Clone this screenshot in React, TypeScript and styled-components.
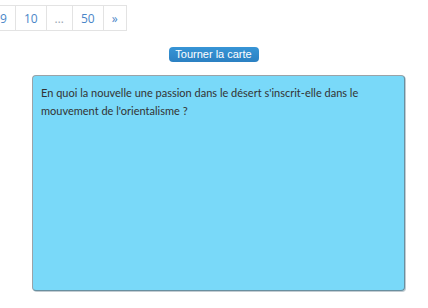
import React from "react";
import styled, { createGlobalStyle } from "styled-components";

const Global = createGlobalStyle`
  html, body { margin: 0; padding: 0; background: #fff; }
  body { font-family: "Open Sans", "Noto Sans", sans-serif; color: #333; }
`;

const Page = styled.div`
  width: 428px;
  height: 308px;
  overflow: hidden;
  display: flex;
  flex-direction: column;
`;

const Pager = styled.ul`
  list-style: none;
  margin: 5px 0 0 -8px;
  padding: 0;
  display: flex;
`;

const PageItem = styled.li<{ $muted?: boolean }>`
  height: 24px;
  padding: 0 8px;
  border: 1px solid #e3e3e3;
  margin-left: -1px;
  display: flex;
  align-items: center;
  justify-content: center;
  font-size: 12px;
  color: ${(p) => (p.$muted ? "#9aa6b3" : "#4a86c8")};
  background: #fff;
`;

const ButtonRow = styled.div`
  display: flex;
  justify-content: center;
  margin-top: 16px;
  padding-right: 1px;
`;

const FlipButton = styled.button`
  font-family: "Liberation Sans", Arial, sans-serif;
  font-size: 11px;
  line-height: 15px;
  height: 15px;
  padding: 0 6px;
  width: 90px;
  color: #fff;
  border: none;
  border-radius: 4px;
  background: linear-gradient(#3795d6, #2b80c2);
  cursor: pointer;
`;

const Card = styled.div`
  margin: 13px 0 0 32px;
  width: 373px;
  height: 216px;
  box-sizing: border-box;
  background: #79d9f9;
  border: 1px solid #9aa3a8;
  border-right-color: #6a8f9f;
  border-bottom-color: #6a8f9f;
  border-radius: 4px;
  box-shadow: 1px 1px 0 rgba(80, 110, 125, 0.35);
  padding: 8px 8px;
`;

const Question = styled.p`
  margin: 0;
  font-family: Lato, "Open Sans", sans-serif;
  font-size: 11px;
  line-height: 18px;
  color: #333;
`;

export default function App() {
  return (
    <Page>
      <Global />
      <Pager>
        <PageItem>9</PageItem>
        <PageItem>10</PageItem>
        <PageItem $muted>…</PageItem>
        <PageItem>50</PageItem>
        <PageItem>»</PageItem>
      </Pager>
      <ButtonRow>
        <FlipButton>Tourner la carte</FlipButton>
      </ButtonRow>
      <Card>
        <Question>
          En quoi la nouvelle une passion dans le désert s'inscrit-elle dans le
          mouvement de l'orientalisme ?
        </Question>
      </Card>
    </Page>
  );
}
